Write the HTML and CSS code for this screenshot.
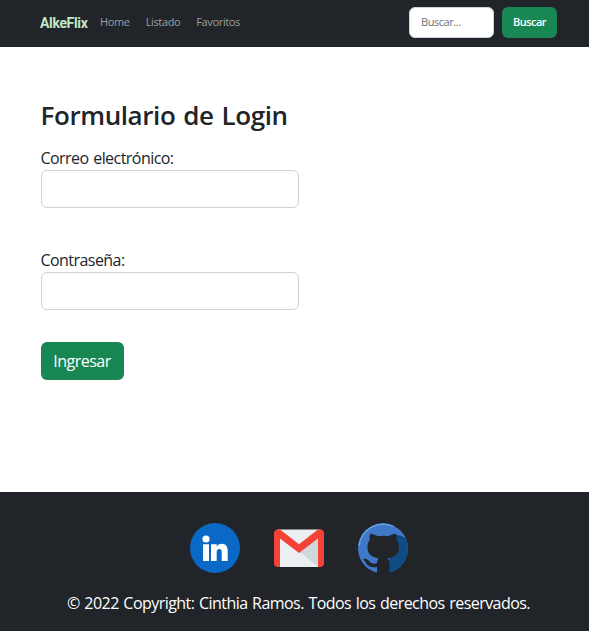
FILE: index.html
```html
<!DOCTYPE html>
<html lang="es">
<head>
<meta charset="utf-8">
<title>AlkeFlix</title>
<link rel="stylesheet" href="styles.css">
</head>
<body>
<header class="navbar">
  <a class="brand">AlkeFlix</a>
  <nav class="links"><a>Home</a><a>Listado</a><a>Favoritos</a></nav>
  <form class="search"><input type="text" placeholder="Buscar..."><button type="button">Buscar</button></form>
</header>
<main class="content">
  <h2>Formulario de Login</h2>
  <form class="login">
    <label for="email">Correo electrónico:</label>
    <input id="email" type="text">
    <label for="pass">Contraseña:</label>
    <input id="pass" type="password">
    <button type="button">Ingresar</button>
  </form>
</main>
<footer class="footer">
  <div class="social">
    <svg viewBox="0 0 50 50">
      <circle cx="25" cy="25" r="25" fill="#0a69c7"/>
      <g fill="#fff"><circle cx="16" cy="16" r="3.600"/><path d="M13 21.300h6V38h-6zM21 21.300h5.700v2.200c1-1.700 2.800-2.700 5-2.700 4.200 0 6 2.800 6 7V38h-6v-9c0-2-.7-3-2.300-3s-2.700 1-2.700 3v9H21z"/></g>
    </svg>
    <svg viewBox="0 0 50 50">
      <path d="M4 6.500h42v37.500H4z" fill="#eceff1"/>
      <path d="M25 28 44 16v28z" fill="#cfd8dc"/>
      <path d="M6 15.500V44H4a4 4 0 0 1-4-4V10.500a4.200 4.200 0 0 1 7-3.200l18 14 18-14a4.200 4.200 0 0 1 7 3.200V40a4 4 0 0 1-4 4h-2V15.500L25 30z" fill="#f44336"/>
    </svg>
    <svg viewBox="0 0 50 50">
      <defs><clipPath id="disc"><circle cx="25" cy="25.500" r="25"/></clipPath></defs>
      <g clip-path="url(#disc)"><path d="M0 0h50v50H0z" fill="#4078c8"/><path d="M38 12Q44 12 50 17v33H31V36q8-8 7-24" fill="#104c84"/></g>
      <path d="M1 23A24.300 24.300 0 0 1 36 3.700" fill="none" stroke="#64a2e8" stroke-width="1.300"/>
      <path d="M19 51v-7c-6 1-9-1-11-4-1-2-2-3-3-4 4-1 5 1 7 3 2 2 5 2 7 1 0-2 .5-3 1.500-4.500C13 34 9.500 31 9.500 24c0-3 .5-5 2.500-7-1-2-.5-4 .3-6.300 3 0 5 1 7.200 2.600 4-.8 7-.8 11 0C33 11.700 35 10.700 38 10.700c.8 2.300 1 4.300.3 6.300 2 2 2.700 4 2.700 7 0 7-3.500 10-11.500 11.500C31 37 31.500 39 31.500 42v9z" fill="#212529"/>
    </svg>
  </div>
  <p>© 2022 Copyright: Cinthia Ramos. Todos los derechos reservados.</p>
</footer>
</body>
</html>
```
FILE: styles.css
```css
* { box-sizing: border-box; }
body { margin: 0; height: 631px; display: flex; flex-direction: column; background: #fff; color: #212529; font: 16px/24px "Open Sans", "Noto Sans", sans-serif; overflow: hidden; }
input, button { font-family: inherit; margin: 0; }
.navbar { height: 47px; flex: none; background: #212529; display: flex; align-items: center; padding: 0 32px 2px 40px; font-size: 11px; }
.brand { width: 60px; color: #c1e8c4; font: bold 14px/20px Roboto, sans-serif; letter-spacing: -.35px; }
.links { display: flex; gap: 16px; color: #9b9d9f; letter-spacing: -.36px; margin-top: -2px; }
.search { margin-left: auto; display: flex; gap: 8px; }
.search input { width: 85px; height: 31px; border: 1px solid #ced4da; border-radius: 6px; padding: 0 11px 2px; font-size: 11px; letter-spacing: -.45px; }
.search input::placeholder { color: #6c757d; opacity: 1; }
.search button { width: 55px; height: 31px; border: 0; border-radius: 6px; background: #198754; color: #fff; padding: 0 0 2px; font-size: 11px; font-weight: 600; letter-spacing: -.55px; }
.content { flex: none; height: 445px; padding: 52px 40.5px 0; }
h2 { margin: 0 0 14px; font-size: 26px; line-height: 33px; font-weight: 600; letter-spacing: -.4px; word-spacing: 1.5px; }
.login { display: flex; flex-direction: column; align-items: flex-start; }
.login label { letter-spacing: -.55px; word-spacing: 1px; }
.login input { width: 258px; height: 38px; border: 1px solid #ced4da; border-radius: 6px; margin-bottom: 40px; }
.login #pass { margin-bottom: 32px; }
.login button { width: 83px; height: 38px; border: 0; border-radius: 6px; background: #198754; color: #fff; font-size: 16px; letter-spacing: -.5px; padding: 0; }
.footer { flex: 1; background: #212529; color: #fff; padding: 31px 0 0; }
.social { display: flex; justify-content: center; gap: 34px; padding-left: 9px; }
.social svg { width: 50px; height: 50px; display: block; }
.footer p { margin: 18px 0 0; padding-left: 8px; text-align: center; white-space: nowrap; letter-spacing: -.55px; word-spacing: 1px; }
```
